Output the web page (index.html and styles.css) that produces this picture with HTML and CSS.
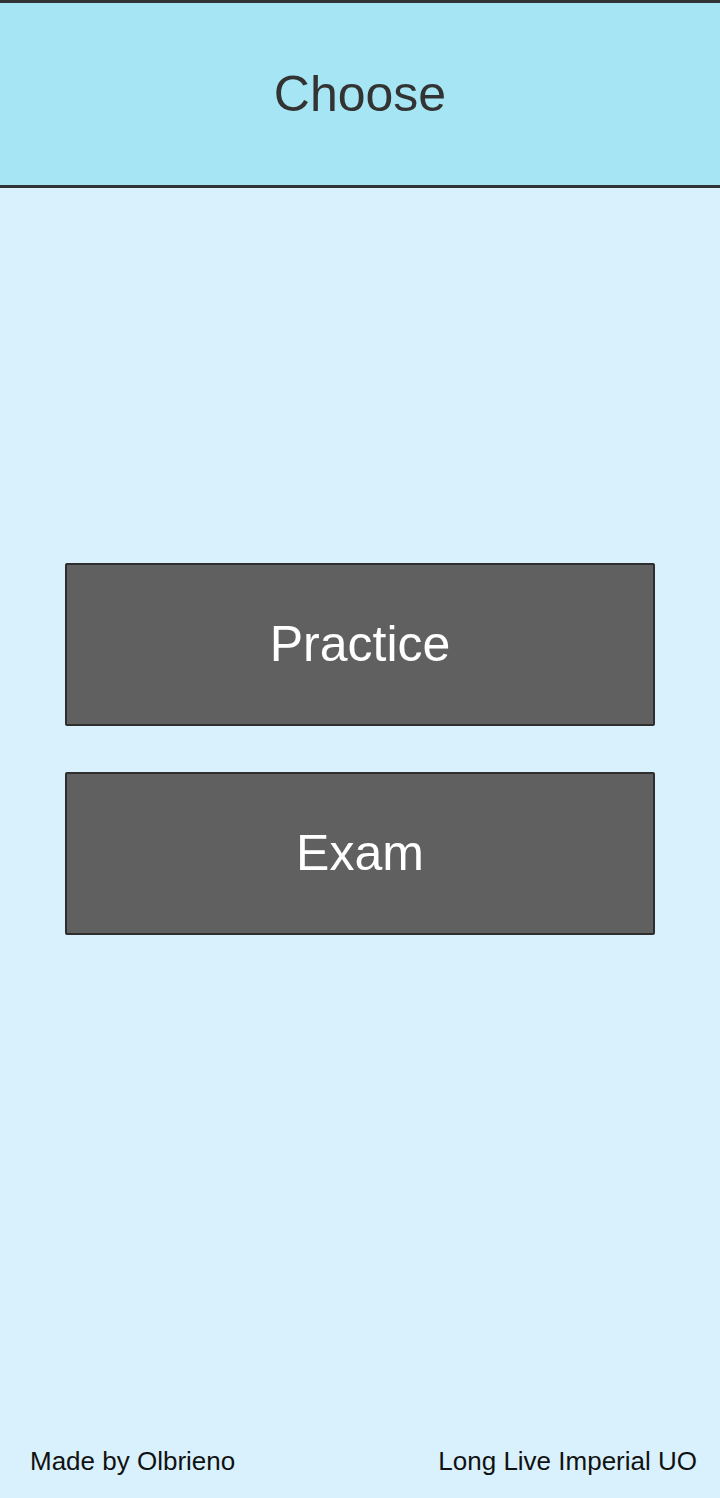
FILE: index.html
```html
<!DOCTYPE html>
<html lang="en">
<head>
  <meta charset="UTF-8" />
  <meta name="viewport" content="width=device-width, initial-scale=1.0"/>
  <title>Choose</title>
  <link rel="stylesheet" href="styles.css">
</head>
<body>
  <div class="screen">
    <div class="top-bar">
      <header class="title">Choose</header>
    </div>

    <!-- MODE BUTTONS -->
    <div class="menu">
      <button type="button" class="mode-btn">Practice</button>
      <button type="button" class="mode-btn">Exam</button>
    </div>

    <div class="footer">
      <span>Made by Olbrieno</span>
      <span>Long Live Imperial UO</span>
    </div>
  </div>
</body>
</html>
```

FILE: styles.css
```css
body {
  font-family: "Liberation Sans", Arial, sans-serif;
  background-color: #d8f1fc;
  margin: 0;
}

.screen {
  display: flex;
  flex-direction: column;
  height: 100vh;
}

.top-bar {
  height: 182px;
  background: #a6e6f4;
  border-top: 3px solid #2f3336;
  border-bottom: 3px solid #2f3336;
  display: flex;
  align-items: center;
  justify-content: center;
}

.title {
  font-size: 50px;
  color: #333333;
}

.menu {
  flex: 1;
  display: flex;
  flex-direction: column;
  align-items: center;
  justify-content: center;
  gap: 46px;
  padding-bottom: 137px;
}

.mode-btn {
  width: 590px;
  height: 163px;
  background-color: #606060;
  border: 2px solid #2e2e2e;
  border-radius: 2px;
  color: #ffffff;
  font-family: "Liberation Sans", Arial, sans-serif;
  font-size: 50px;
  cursor: pointer;
}

.footer {
  display: flex;
  justify-content: space-between;
  padding: 0 23px 21px 30px;
  font-size: 26px;
  color: #111111;
}
```
